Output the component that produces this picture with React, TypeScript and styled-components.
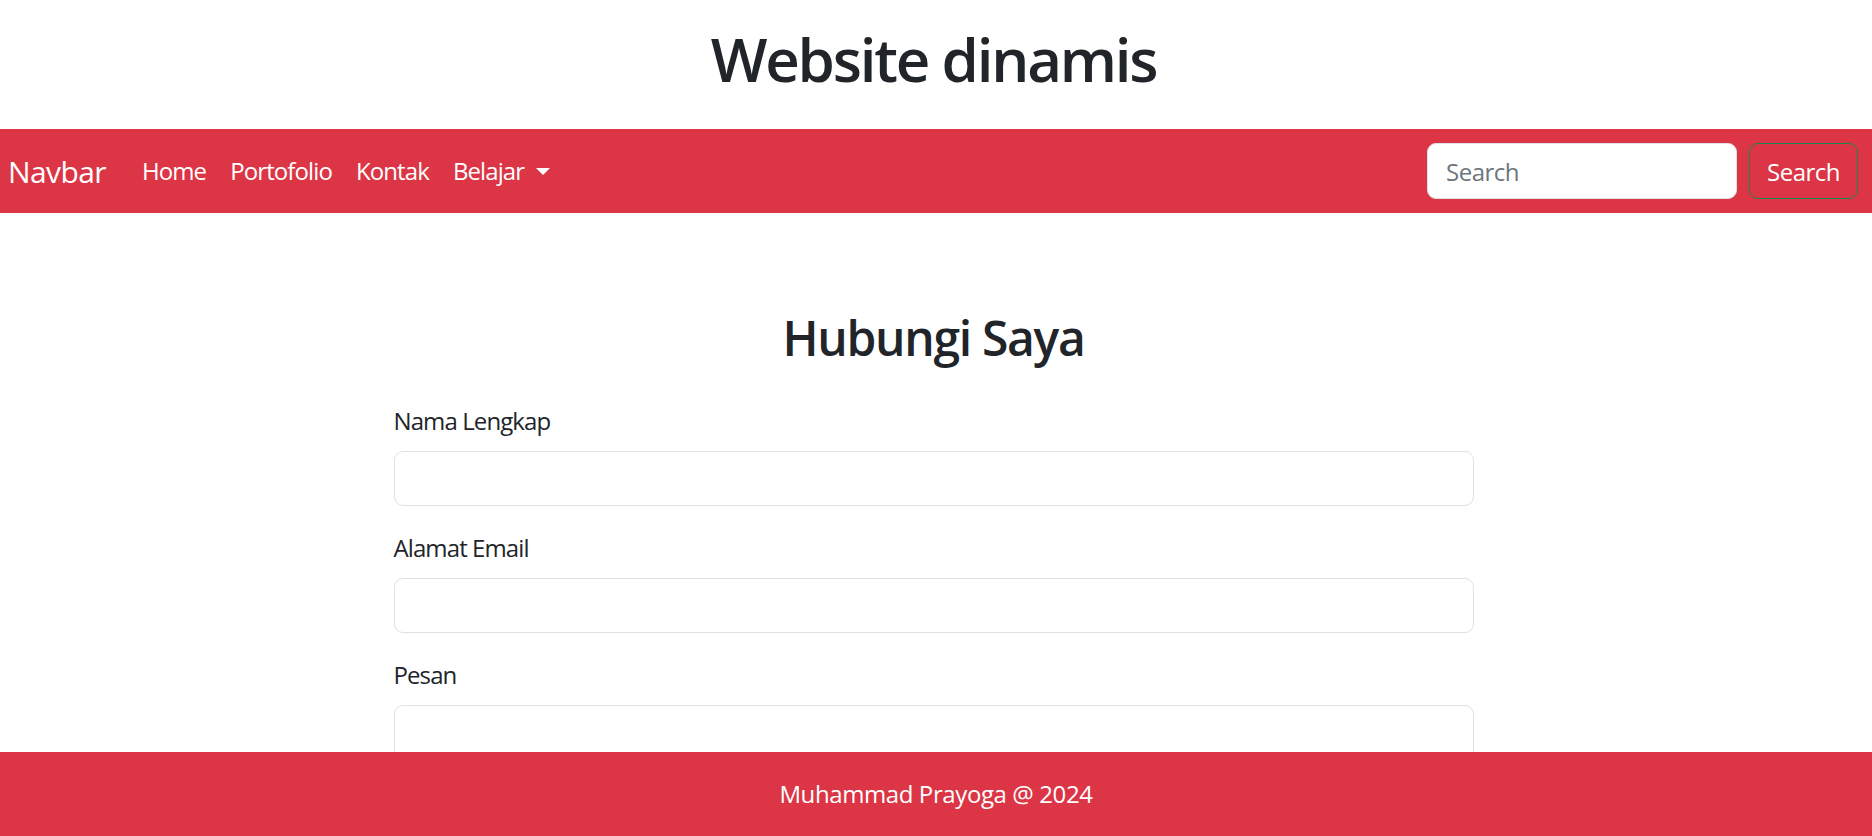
import React from 'react'
import styled, { createGlobalStyle } from 'styled-components'

const colors = {
  danger: '#dc3545',
  text: '#212529',
  border: '#dee2e6',
  success: '#198754',
  placeholder: '#6c757d',
}

const GlobalStyle = createGlobalStyle`
  * {
    box-sizing: border-box;
  }
  html, body {
    margin: 0;
    padding: 0;
    background: #fff;
  }
  body {
    font-family: 'Open Sans', 'Noto Sans', 'Liberation Sans', sans-serif;
    color: ${colors.text};
  }
`

const Page = styled.div`
  display: flex;
  flex-direction: column;
  height: 100vh;
  overflow: hidden;
`

const Header = styled.header`
  height: 129px;
  flex-shrink: 0;
  padding-right: 5px;
  h1 {
    margin: 0;
    padding-top: 23px;
    text-align: center;
    font-size: 60px;
    line-height: 1.2;
    font-weight: 600;
    letter-spacing: -2.2px;
  }
`

const Navbar = styled.nav`
  display: flex;
  align-items: center;
  height: 84px;
  flex-shrink: 0;
  padding: 0 14px 0 8px;
  background-color: ${colors.danger};
`

const Brand = styled.a`
  color: #fff;
  font-size: 30px;
  line-height: 1.5;
  letter-spacing: -0.6px;
  text-decoration: none;
  margin-right: 24px;
`

const NavList = styled.ul`
  display: flex;
  align-items: center;
  list-style: none;
  margin: 0;
  padding: 0;
  flex: 1;
`

interface NavLinkProps {
  $dropdown?: boolean
}

const NavLink = styled.a<NavLinkProps>`
  display: block;
  padding: 0 12px;
  color: #fff;
  font-size: 24px;
  line-height: 36px;
  letter-spacing: -0.9px;
  text-decoration: none;

  ${({ $dropdown }) =>
    $dropdown &&
    `&::after {
      content: '';
      display: inline-block;
      margin-left: 12px;
      vertical-align: 5px;
      border-top: 7px solid #fff;
      border-left: 7px solid transparent;
      border-right: 7px solid transparent;
    }
  `}
`

const SearchForm = styled.form`
  display: flex;
  align-items: center;
  gap: 12px;
`

const SearchInput = styled.input`
  width: 310px;
  height: 56px;
  padding: 9px 18px;
  font-family: inherit;
  font-size: 24px;
  letter-spacing: -0.5px;
  color: ${colors.text};
  background: #fff;
  border: 1px solid ${colors.border};
  border-radius: 9px;
  outline: none;

  &::placeholder {
    color: ${colors.placeholder};
  }
`

const SearchButton = styled.button`
  height: 56px;
  padding: 0 17px;
  font-family: inherit;
  font-size: 24px;
  letter-spacing: -0.5px;
  color: #fff;
  background: transparent;
  border: 1px solid ${colors.success};
  border-radius: 9px;
  cursor: pointer;
`

const Main = styled.main`
  flex: 1;
  overflow: hidden;
  padding-right: 5px;
`

const ContactSection = styled.section`
  width: 1080px;
  margin: 0 auto;
  padding-top: 96px;

  h2 {
    margin: 0 0 36px;
    text-align: center;
    font-size: 48px;
    line-height: 1.2;
    font-weight: 600;
    letter-spacing: -1.3px;
  }
`

const Field = styled.div`
  margin-bottom: 24px;
`

const Label = styled.label`
  display: block;
  margin-bottom: 12px;
  font-size: 24px;
  line-height: 36px;
  letter-spacing: -0.9px;
`

const inputBase = `
  display: block;
  width: 100%;
  padding: 9px 18px;
  font-family: inherit;
  font-size: 24px;
  color: ${colors.text};
  background: #fff;
  border: 1px solid ${colors.border};
  border-radius: 9px;
  outline: none;
`

const TextInput = styled.input`
  ${inputBase}
  height: 55px;
`

const TextArea = styled.textarea`
  ${inputBase}
  height: 130px;
  resize: vertical;
`

const Footer = styled.footer`
  display: flex;
  align-items: center;
  justify-content: center;
  height: 84px;
  flex-shrink: 0;
  background-color: ${colors.danger};
  color: #fff;
  font-size: 24px;
  line-height: 36px;
  letter-spacing: -0.4px;
`

function App() {
  return (
    <Page>
      <GlobalStyle />
      <Header>
        <h1>Website dinamis</h1>
      </Header>
      <Navbar>
        <Brand href="#">Navbar</Brand>
        <NavList>
          <li>
            <NavLink href="#">Home</NavLink>
          </li>
          <li>
            <NavLink href="#">Portofolio</NavLink>
          </li>
          <li>
            <NavLink href="#">Kontak</NavLink>
          </li>
          <li>
            <NavLink href="#" $dropdown>
              Belajar
            </NavLink>
          </li>
        </NavList>
        <SearchForm onSubmit={(e) => e.preventDefault()}>
          <SearchInput type="search" placeholder="Search" />
          <SearchButton type="submit">Search</SearchButton>
        </SearchForm>
      </Navbar>
      <Main>
        <ContactSection>
          <h2>Hubungi Saya</h2>
          <form onSubmit={(e) => e.preventDefault()}>
            <Field>
              <Label htmlFor="nama">Nama Lengkap</Label>
              <TextInput id="nama" type="text" />
            </Field>
            <Field>
              <Label htmlFor="email">Alamat Email</Label>
              <TextInput id="email" type="email" />
            </Field>
            <Field>
              <Label htmlFor="pesan">Pesan</Label>
              <TextArea id="pesan" />
            </Field>
          </form>
        </ContactSection>
      </Main>
      <Footer>Muhammad Prayoga @ 2024</Footer>
    </Page>
  )
}

export default App
